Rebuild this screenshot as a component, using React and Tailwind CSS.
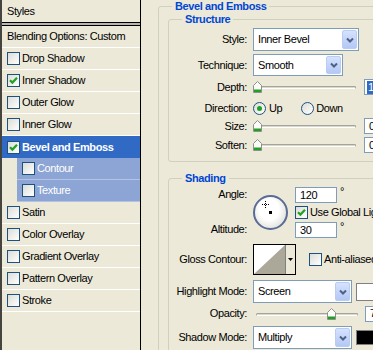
import React from "react";

const styleRows = [
  { label: "Drop Shadow" },
  { label: "Inner Shadow", checked: true },
  { label: "Outer Glow" },
  { label: "Inner Glow" },
  { label: "Bevel and Emboss", checked: true, active: true },
  { label: "Contour", sub: true },
  { label: "Texture", sub: true },
  { label: "Satin" },
  { label: "Color Overlay" },
  { label: "Gradient Overlay" },
  { label: "Pattern Overlay" },
  { label: "Stroke" },
];

function Checkbox({ checked }) {
  return (
    <span className="flex h-[13px] w-[13px] shrink-0 items-center justify-center border border-[#1C5180] bg-linear-to-br from-[#DCDCD7] to-white">
      {checked && (
        <svg width="11" height="11" viewBox="0 0 11 11">
          <path d="M2 5.2 L4.4 7.6 L9 2.8" stroke="#21A121" strokeWidth="2.2" fill="none" />
        </svg>
      )}
    </span>
  );
}

function Radio({ checked }) {
  return (
    <span className="flex h-[13px] w-[13px] shrink-0 items-center justify-center rounded-full border border-[#1C5180] bg-linear-to-br from-[#DCDCD7] to-white">
      {checked && <span className="h-[5px] w-[5px] rounded-full bg-[#21A121]" />}
    </span>
  );
}

function Select({ value, width, height = 22 }) {
  return (
    <div
      className="flex shrink-0 items-stretch border border-[#7F9DB9] bg-white p-px"
      style={{ width, height }}
    >
      <span className="flex flex-1 items-center pl-[3px]">{value}</span>
      <span className="flex w-[15px] items-center justify-center rounded-[2px] border border-[#B9CCF5] bg-linear-to-b from-[#D6E2FD] to-[#B4C8F6]">
        <svg width="8" height="6" viewBox="0 0 8 6">
          <path d="M1 1.5 L4 4.5 L7 1.5" stroke="#4D6185" strokeWidth="2" fill="none" />
        </svg>
      </span>
    </div>
  );
}

function Slider({ width, pos, className = "" }) {
  return (
    <div className={`relative h-[14px] shrink-0 ${className}`} style={{ width }}>
      <div className="absolute inset-x-0 top-[6px] h-[3px] rounded-full border border-[#A4A498] border-b-white bg-[#DAD8CC]" />
      <svg className="absolute top-[1px]" style={{ left: pos }} width="9" height="12" viewBox="0 0 9 12">
        <path d="M0.5 11.5 V4.5 L4.5 0.5 L8.5 4.5 V11.5 Z" fill="#FBFBF8" stroke="#8E8F8F" />
        <rect x="1" y="8.5" width="7" height="2.5" fill="#21A121" />
      </svg>
    </div>
  );
}

function NumBox({ children, className = "" }) {
  return (
    <div className={`flex h-[16px] shrink-0 items-center border border-[#7F9DB9] bg-white px-[4px] ${className}`}>
      {children}
    </div>
  );
}

function Label({ children }) {
  return <span className="w-[84px] shrink-0 pr-[6px] text-right">{children}</span>;
}

function StylesPanel() {
  return (
    <div className="flex h-full w-[141px] shrink-0 flex-col border-r border-l-2 border-r-black border-l-[#45443e]">
      <div className="flex h-[22px] items-center pl-[5px]">Styles</div>
      <div className="h-[4px] border-y border-black bg-[#B9B7AD]" />
      <div className="flex h-[22px] items-center border-b border-white pl-[5px]">Blending Options: Custom</div>
      {styleRows.map((row) =>
        row.sub ? (
          <div key={row.label} className="flex h-[22px] pl-[15px]">
            <div className="flex flex-1 items-center gap-[2px] border-b border-[#B3C3E4] bg-[#8DA5D4] pl-[5px] text-white">
              <Checkbox />
              <span>{row.label}</span>
            </div>
          </div>
        ) : row.active ? (
          <div key={row.label} className="flex h-[22px] items-center gap-[2px] bg-[#316AC5] pl-[5px] font-bold text-white">
            <Checkbox checked />
            <span>{row.label}</span>
          </div>
        ) : (
          <div key={row.label} className="flex h-[22px] items-center gap-[2px] border-b border-white pl-[5px]">
            <Checkbox checked={row.checked} />
            <span>{row.label}</span>
          </div>
        )
      )}
    </div>
  );
}

export default function App() {
  return (
    <div className="flex h-[350px] w-[373px] overflow-hidden bg-[#ECE9D8] font-['Liberation_Sans',Arial,sans-serif] text-[11px] leading-[13px] tracking-[-0.4px] text-black">
      <StylesPanel />

      <div className="min-w-0 flex-1 pl-[17px]">
        <fieldset className="w-[340px] rounded-[3px] border border-[#D0D0BF] pl-[9px]">
          <legend className="ml-[4px] px-[3px] font-bold text-[#0046D5]">Bevel and Emboss</legend>

          <fieldset className="rounded-[3px] border border-[#D0D0BF] pt-[2px] pb-[7px]">
            <legend className="ml-[13px] px-[3px] font-bold text-[#0046D5]">Structure</legend>

            <div className="flex h-[23px] items-center">
              <Label>Style:</Label>
              <Select value="Inner Bevel" width={106} height={23} />
            </div>
            <div className="mt-[3px] flex h-[22px] items-center">
              <Label>Technique:</Label>
              <Select value="Smooth" width={90} />
            </div>
            <div className="mt-[2px] flex h-[18px] items-center">
              <Label>Depth:</Label>
              <Slider width={103} pos={0} />
              <NumBox className="ml-[8px] w-[40px] pl-[2px]">
                <span className="bg-[#316AC5] px-px text-white">1</span>
              </NumBox>
            </div>
            <div className="mt-[3px] flex h-[18px] items-center">
              <Label>Direction:</Label>
              <Radio checked />
              <span className="ml-[3px]">Up</span>
              <span className="ml-[19px]">
                <Radio />
              </span>
              <span className="ml-[2px]">Down</span>
            </div>
            <div className="flex h-[18px] items-center">
              <Label>Size:</Label>
              <Slider width={103} pos={0} />
              <NumBox className="ml-[8px] w-[40px]">0</NumBox>
            </div>
            <div className="mt-px flex h-[18px] items-center">
              <Label>Soften:</Label>
              <Slider width={103} pos={0} />
              <NumBox className="ml-[8px] w-[40px]">0</NumBox>
            </div>
          </fieldset>

          <fieldset className="mt-[10px] rounded-[3px] border border-[#D0D0BF] pt-[2px] pb-[20px]">
            <legend className="ml-[13px] px-[3px] font-bold text-[#0046D5]">Shading</legend>

            <div className="flex">
              <div className="flex w-[84px] shrink-0 flex-col justify-between pr-[6px] pb-[2px] text-right">
                <span className="pt-[1px]">Angle:</span>
                <span>Altitude:</span>
              </div>
              <div className="flex h-[51px] items-center">
                <div className="relative h-[35px] w-[35px] rounded-full border-2 border-[#5A6C95] bg-radial-[at_45%_40%] from-white from-40% to-[#CFCFC8]">
                  <svg className="absolute inset-0" width="31" height="31" viewBox="0 0 31 31">
                    <path d="M10.5 4 V11 M7 7.5 H14" stroke="#000" strokeWidth="1" strokeDasharray="1 1" />
                    <rect x="14" y="14" width="3" height="3" fill="#000" />
                  </svg>
                </div>
              </div>
              <div className="ml-[7px] flex flex-col">
                <div className="flex">
                  <NumBox className="w-[42px]">120</NumBox>
                  <span className="ml-[3px] leading-[9px]">°</span>
                </div>
                <div className="mt-[3px] flex items-center gap-[2px] whitespace-nowrap">
                  <Checkbox checked />
                  <span>Use Global Light</span>
                </div>
                <div className="mt-[3px] flex">
                  <NumBox className="w-[42px]">30</NumBox>
                  <span className="ml-[3px] leading-[9px]">°</span>
                </div>
              </div>
            </div>

            <div className="mt-[6px] flex h-[31px] items-center">
              <Label>Gloss Contour:</Label>
              <div className="flex h-[31px] w-[43px] border border-black bg-[#ECE9D8]">
                <svg width="31" height="29" viewBox="0 0 31 29" className="bg-white">
                  <path d="M0 29 L31 0 L31 29 Z" fill="#ACA899" />
                </svg>
                <span className="flex flex-1 items-center justify-center border-l border-[#808080]">
                  <svg width="5" height="3" viewBox="0 0 5 3">
                    <path d="M0 0 H5 L2.5 3 Z" fill="#000" />
                  </svg>
                </span>
              </div>
              <span className="ml-[13px]">
                <Checkbox />
              </span>
              <span className="ml-[2px] whitespace-nowrap">Anti-aliased</span>
            </div>

            <div className="mt-[5px] flex h-[23px] items-center">
              <Label>Highlight Mode:</Label>
              <Select value="Screen" width={99} height={23} />
              <span className="ml-[4px] h-[18px] w-[40px] border border-[#808080] bg-white" />
            </div>

            <div className="mt-[2px] flex h-[17px] items-center">
              <Label>Opacity:</Label>
              <Slider width={102} pos={71} className="ml-[3px]" />
              <NumBox className="ml-[7px] w-[40px]">75</NumBox>
            </div>

            <div className="mt-[4px] flex h-[23px] items-center">
              <Label>Shadow Mode:</Label>
              <Select value="Multiply" width={99} height={23} />
              <span className="ml-[4px] h-[15px] w-[40px] border border-[#808080] bg-black" />
            </div>
          </fieldset>
        </fieldset>
      </div>
    </div>
  );
}
